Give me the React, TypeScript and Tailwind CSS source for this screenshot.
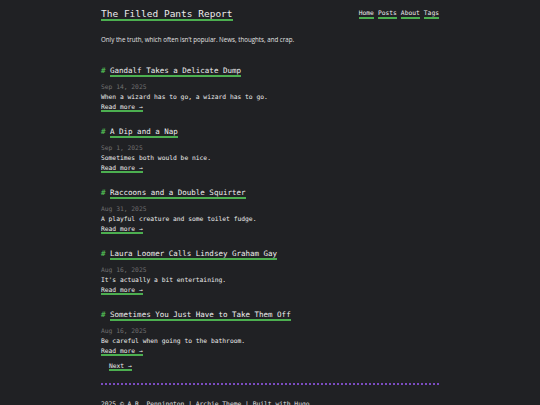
const MONO = "font-['DejaVu_Sans_Mono','Liberation_Mono',monospace]";

const posts = [
  { title: "Gandalf Takes a Delicate Dump", date: "Sep 14, 2025", summary: "When a wizard has to go, a wizard has to go." },
  { title: "A Dip and a Nap", date: "Sep 1, 2025", summary: "Sometimes both would be nice." },
  { title: "Raccoons and a Double Squirter", date: "Aug 31, 2025", summary: "A playful creature and some toilet fudge." },
  { title: "Laura Loomer Calls Lindsey Graham Gay", date: "Aug 16, 2025", summary: "It's actually a bit entertaining." },
  { title: "Sometimes You Just Have to Take Them Off", date: "Aug 16, 2025", summary: "Be careful when going to the bathroom." },
];

function Link({ children, className = "" }: { children: React.ReactNode; className?: string }) {
  return (
    <a href="#" className={`border-b-2 border-[#4caf50] text-inherit no-underline ${className}`}>
      {children}
    </a>
  );
}

export default function App() {
  return (
    <div className={`min-h-screen bg-[#202124] text-[#ececec] ${MONO}`}>
      <div className="mx-auto w-[338px] pt-[7px]">
        <header className="flex h-[14px] items-center justify-between">
          <Link className="text-[9.5px] leading-[11px] text-[#f0f0f0]">The Filled Pants Report</Link>
          <nav className="flex gap-[4px] text-[6.3px] leading-[8px]">
            {["Home", "Posts", "About", "Tags"].map((item) => (
              <Link key={item}>{item}</Link>
            ))}
          </nav>
        </header>

        <p className="mt-[14px] font-['Open_Sans','Noto_Sans',sans-serif] text-[6.2px] leading-[10px] text-[#e2e2e2]">
          Only the truth, which often isn’t popular. News, thoughts, and crap.
        </p>

        <main className="mt-[20px] flex flex-col gap-[14.5px]">
          {posts.map((post) => (
            <article key={post.title}>
              <h2 className="text-[7.5px] leading-[12px] text-[#f0f0f0]">
                <span className="font-bold text-[#4caf50]"># </span>
                <Link>{post.title}</Link>
              </h2>
              <div className="mt-[4.5px] text-[6.3px] leading-[10px]">
                <div className="text-[#707070]">{post.date}</div>
                <div>{post.summary}</div>
                <div>
                  <Link>Read more →</Link>
                </div>
              </div>
            </article>
          ))}
        </main>

        <div className="mt-[5.5px] pl-[8px] text-[6.3px] leading-[10px]">
          <Link>Next →</Link>
        </div>

        <hr className="mt-[12px] border-0 border-t-2 border-dotted border-[#7b4cc0]" />

        <footer className="mt-[14px] text-[6.3px] leading-[10px] text-[#e2e2e2]">
          2025 © A.R. Pennington | Archie Theme | Built with Hugo
        </footer>
      </div>
    </div>
  );
}
